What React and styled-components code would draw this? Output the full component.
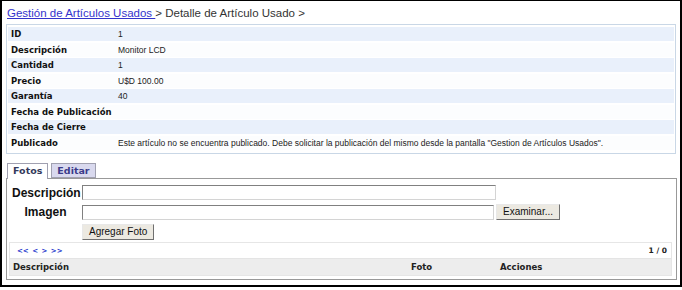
import React from "react";
import styled, { createGlobalStyle } from "styled-components";

const GlobalStyle = createGlobalStyle`
  html, body {
    margin: 0;
    padding: 0;
    background: #fff;
  }
  body {
    font-family: "Liberation Sans", Arial, sans-serif;
    color: #222;
  }
`;

const Frame = styled.div`
  box-sizing: border-box;
  width: 682px;
  height: 287px;
  border: 2px solid #000;
  border-top-width: 1px;
  padding: 4px 3px 0 4px;
`;

const Breadcrumb = styled.div`
  font-size: 11.5px;
  color: #333;
  height: 18px;
  line-height: 17px;
  padding-left: 1px;

  a {
    color: #3333cc;
    text-decoration: underline;
  }
`;

const InfoBox = styled.div`
  margin-top: 1px;
  border: 1px solid #c9d7e6;
  padding: 2px 1px;
  background: #fff;
  width: 670px;
  box-sizing: border-box;
`;

const InfoRow = styled.div`
  display: grid;
  grid-template-columns: 107px 1fr;
  height: 14px;
  margin-bottom: 1.5px;
  align-items: center;
  padding-left: 3px;
  background: ${(p) => (p.$alt ? "#fcfdfe" : "#e9f0fb")};
  font-size: 9px;
`;

const Label = styled.span`
  font-weight: bold;
  font-family: "DejaVu Sans", Verdana, sans-serif;
  font-size: 8.5px;
  color: #111;
`;

const Value = styled.span`
  font-family: "Liberation Sans", Arial, sans-serif;
  font-size: 8.5px;
  color: #222;
  white-space: nowrap;
`;

const Tabs = styled.div`
  display: flex;
  gap: 3px;
  margin-top: 8px;
  padding-left: 1px;
  height: 16px;
  align-items: flex-end;
`;

const Tab = styled.div`
  box-sizing: border-box;
  height: ${(p) => (p.$active ? "16px" : "15px")};
  padding: 0 5px;
  border: 1px solid #a0a0b0;
  border-bottom: ${(p) => (p.$active ? "none" : "1px solid #a0a0b0")};
  background: ${(p) => (p.$active ? "#fff" : "#d9d9ee")};
  color: ${(p) => (p.$active ? "#343a5c" : "#3b3b8a")};
  font-family: "DejaVu Sans", Verdana, sans-serif;
  font-weight: bold;
  font-size: 9.5px;
  line-height: 14px;
  margin-bottom: ${(p) => (p.$active ? "-1px" : "0")};
  position: relative;
`;

const Panel = styled.div`
  box-sizing: border-box;
  width: 671px;
  height: 102px;
  border: 1px solid #999;
  padding: 6px 2px 0 2px;
`;

const FormGrid = styled.div`
  display: grid;
  grid-template-columns: 73px auto;
  row-gap: 4px;
  align-items: center;
`;

const FormLabel = styled.label`
  font-family: "Liberation Sans", Arial, sans-serif;
  font-weight: bold;
  font-size: 12px;
  color: #111;
  text-align: ${(p) => (p.$center ? "center" : "left")};
  padding-left: ${(p) => (p.$center ? "0" : "3px")};
`;

const Field = styled.div`
  display: flex;
  gap: 2px;
  align-items: center;
`;

const TextInput = styled.div`
  box-sizing: border-box;
  width: ${(p) => p.$w}px;
  height: 15px;
  border: 1px solid #d4d4d4;
  border-top-color: #808080;
  border-left-color: #808080;
  background: #fff;
`;

const Button = styled.div`
  box-sizing: border-box;
  height: 16px;
  padding: 0 6px;
  border: 1px solid #e8e8e8;
  border-right-color: #707070;
  border-bottom-color: #707070;
  background: #ece9e1;
  font-family: "Liberation Sans", Arial, sans-serif;
  font-size: 10px;
  line-height: 14px;
  color: #111;
`;

const GridTable = styled.div`
  margin-top: 2px;
  border: 1px solid #e6e6e6;
  margin-right: 2px;
`;

const PagerRow = styled.div`
  display: flex;
  justify-content: space-between;
  align-items: center;
  height: 15px;
  padding: 0 4px 0 7px;
  background: #fff;
  border-bottom: 1px solid #e4e4e4;
`;

const PagerLinks = styled.span`
  font-family: "DejaVu Sans", Verdana, sans-serif;
  font-size: 7px;
  font-weight: bold;
  color: #2233cc;
  word-spacing: 1px;
`;

const PageCount = styled.span`
  font-family: "DejaVu Sans", Verdana, sans-serif;
  font-size: 7.5px;
  font-weight: bold;
  color: #222;
`;

const HeaderRow = styled.div`
  display: grid;
  grid-template-columns: 398px 89px 1fr;
  align-items: center;
  height: 16px;
  padding-left: 3px;
  background: #ededed;
  font-family: "DejaVu Sans", Verdana, sans-serif;
  font-size: 8.5px;
  font-weight: bold;
  color: #222;
`;

const rows = [
  ["ID", "1"],
  ["Descripción", "Monitor LCD"],
  ["Cantidad", "1"],
  ["Precio", "U$D 100.00"],
  ["Garantía", "40"],
  ["Fecha de Publicación", ""],
  ["Fecha de Cierre", ""],
  [
    "Publicado",
    'Este artículo no se encuentra publicado. Debe solicitar la publicación del mismo desde la pantalla "Gestion de Artículos Usados".',
  ],
];

export default function App() {
  return (
    <>
      <GlobalStyle />
      <Frame>
        <Breadcrumb>
          <a href="#">Gestión de Artículos Usados </a> &gt; Detalle de Artículo Usado &gt;
        </Breadcrumb>
        <InfoBox>
          {rows.map(([label, value], i) => (
            <InfoRow key={label} $alt={i % 2 === 1}>
              <Label>{label}</Label>
              <Value>{value}</Value>
            </InfoRow>
          ))}
        </InfoBox>
        <Tabs>
          <Tab $active>Fotos</Tab>
          <Tab>Editar</Tab>
        </Tabs>
        <Panel>
          <FormGrid>
            <FormLabel>Descripción</FormLabel>
            <Field>
              <TextInput $w={414} />
            </Field>
            <FormLabel $center>Imagen</FormLabel>
            <Field>
              <TextInput $w={412} />
              <Button>Examinar...</Button>
            </Field>
            <span />
            <Field>
              <Button>Agregar Foto</Button>
            </Field>
          </FormGrid>
          <GridTable>
            <PagerRow>
              <PagerLinks>&lt;&lt; &lt; &gt; &gt;&gt;</PagerLinks>
              <PageCount>1 / 0</PageCount>
            </PagerRow>
            <HeaderRow>
              <span>Descripción</span>
              <span>Foto</span>
              <span>Acciones</span>
            </HeaderRow>
          </GridTable>
        </Panel>
      </Frame>
    </>
  );
}
